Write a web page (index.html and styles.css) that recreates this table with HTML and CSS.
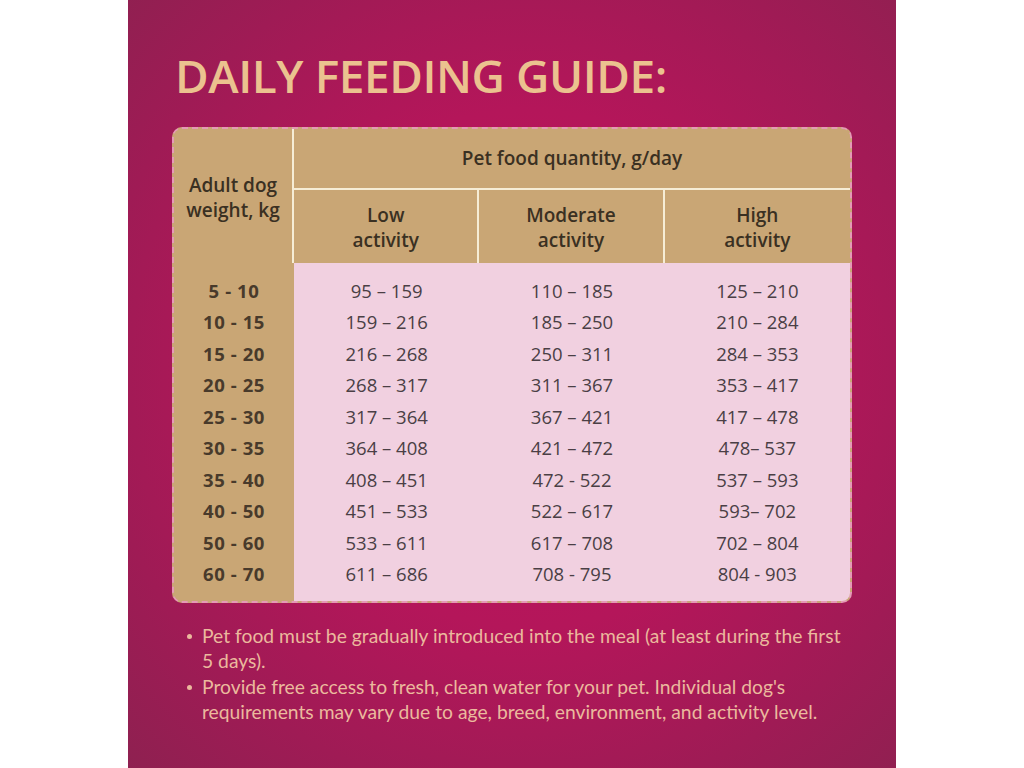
FILE: index.html
```html
<!DOCTYPE html>
<html lang="en">
<head>
<meta charset="utf-8">
<title>Daily Feeding Guide</title>
<link rel="stylesheet" href="styles.css">
</head>
<body>
<main class="panel">
  <h1 class="title">DAILY FEEDING GUIDE:</h1>
  <div class="card">
    <table class="guide">
      <thead>
        <tr>
          <th class="weight-head" rowspan="2">Adult dog<br>weight, kg</th>
          <th class="qty-head" colspan="3">Pet food quantity, g/day</th>
        </tr>
        <tr class="act-row">
          <th class="act">Low<br>activity</th>
          <th class="act">Moderate<br>activity</th>
          <th class="act last">High<br>activity</th>
        </tr>
      </thead>
      <tbody>
        <tr class="first"><td class="w">5 - 10</td><td>95 – 159</td><td>110 – 185</td><td>125 – 210</td></tr>
        <tr><td class="w">10 - 15</td><td>159 – 216</td><td>185 – 250</td><td>210 – 284</td></tr>
        <tr><td class="w">15 - 20</td><td>216 – 268</td><td>250 – 311</td><td>284 – 353</td></tr>
        <tr><td class="w">20 - 25</td><td>268 – 317</td><td>311 – 367</td><td>353 – 417</td></tr>
        <tr><td class="w">25 - 30</td><td>317 – 364</td><td>367 – 421</td><td>417 – 478</td></tr>
        <tr><td class="w">30 - 35</td><td>364 – 408</td><td>421 – 472</td><td>478– 537</td></tr>
        <tr><td class="w">35 - 40</td><td>408 – 451</td><td>472 - 522</td><td>537 – 593</td></tr>
        <tr><td class="w">40 - 50</td><td>451 – 533</td><td>522 – 617</td><td>593– 702</td></tr>
        <tr><td class="w">50 - 60</td><td>533 – 611</td><td>617 – 708</td><td>702 – 804</td></tr>
        <tr class="last-row"><td class="w">60 - 70</td><td>611 – 686</td><td>708 - 795</td><td>804 - 903</td></tr>
      </tbody>
    </table>
  </div>
  <ul class="notes">
    <li>Pet food must be gradually introduced into the meal (at least during the first 5 days).</li>
    <li>Provide free access to fresh, clean water for your pet. Individual dog's requirements may vary due to age, breed, environment, and activity level.</li>
  </ul>
</main>
</body>
</html>
```

FILE: styles.css
```css
* { box-sizing: border-box; }
html, body { margin: 0; padding: 0; background: #ffffff; }
body { width: 1024px; height: 768px; overflow: hidden; }

.panel {
  width: 768px;
  height: 768px;
  margin: 0 auto;
  background: radial-gradient(ellipse 75% 75% at 52% 48%, #c0125c 0%, #b4165a 45%, #9f1b55 75%, #8d2150 100%);
  padding: 51px 44px 0 44px;
  font-family: "Open Sans", "Noto Sans", sans-serif;
  display: flex;
  flex-direction: column;
}

.title {
  margin: 0 0 0 3px;
  font-family: "Open Sans", sans-serif;
  font-weight: 600;
  font-size: 46px;
  line-height: 48px;
  letter-spacing: -0.45px;
  color: #ebc28f;
}

.card {
  margin-top: 28px;
  width: 680px;
  border: 2px dashed #e59ab6;
  border-radius: 10px;
  background: #c9a675;
  overflow: hidden;
}

.guide {
  width: 676px;
  border-collapse: separate;
  border-spacing: 0;
  table-layout: fixed;
  color: #3a3022;
}

.guide th {
  font-weight: 600;
  font-size: 19px;
  line-height: 25px;
  background: #c9a675;
  padding: 0;
  text-align: center;
}

.weight-head {
  width: 120px;
  border-right: 2px solid #f6edd6;
  padding-top: 4px !important;
}

.qty-head {
  height: 61px;
  border-bottom: 2px solid #f6edd6;
}

.act-row th { height: 73px; padding-top: 2px; }
.act { border-right: 2px solid #f6edd6; }
.act.last { border-right: none; }
.act:nth-child(1) { width: 184px; }
.act:nth-child(2) { width: 187px; }

.guide tbody td {
  height: 31.5px;
  padding: 0;
  text-align: center;
  font-size: 18.5px;
  color: #4a3f45;
  background: #f1d0e0;
}

.guide tbody td.w {
  background: #c9a675;
  color: #483a2b;
  font-weight: 700;
  letter-spacing: 0.6px;
}

.guide tbody tr.first td { height: 43px; padding-top: 11px; }
.guide tbody tr.last-row td { height: 43px; padding-bottom: 12px; }

.notes {
  margin: 20px 0 0 0;
  padding: 0 10px 0 30px;
  list-style: none;
  color: #ebb99d;
  font-family: "Lato", sans-serif;
  font-size: 19.3px;
  line-height: 25.3px;
}

.notes li { position: relative; }
.notes li::before {
  content: "";
  position: absolute;
  left: -15px;
  top: 11px;
  width: 5px;
  height: 5px;
  border-radius: 50%;
  background: #ebb99d;
}
```
